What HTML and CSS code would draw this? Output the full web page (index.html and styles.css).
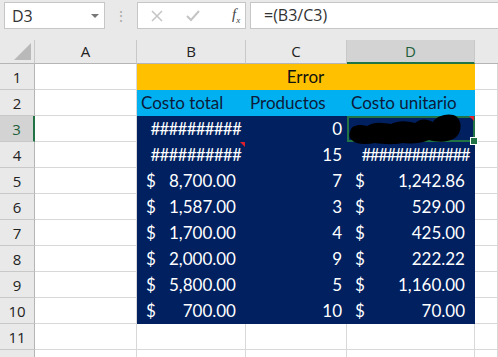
FILE: index.html
```html
<!doctype html>
<html>
<head>
	<title>Costo unitario</title>
	<link rel="stylesheet" href="styles.css">
</head>
<body>
	<div class="bar">
		<div class="namebox">
			<span>D3</span>
			<span class="drop"></span>
		</div>
		<div class="dots">&#8942;</div>
		<div class="buttons">
			<svg width="12" height="12" viewBox="0 0 12 12"><path d="M1 1 L11 11 M11 1 L1 11" stroke="#c4c4c4" stroke-width="1.5"/></svg>
			<svg width="14" height="12" viewBox="0 0 14 12"><path d="M1 6 L5 10 L13 1" stroke="#c4c4c4" stroke-width="2" fill="none"/></svg>
			<span class="fx"><i>f</i><sub>x</sub></span>
		</div>
		<div class="formula">=(B3/C3)</div>
	</div>

	<div class="sheet">
		<div class="hd corner"><span class="tri"></span></div>
		<div class="hd">A</div>
		<div class="hd">B</div>
		<div class="hd">C</div>
		<div class="hd sel">D</div>
		<div class="hd last"></div>

		<div class="rh">1</div>
		<div class="c"></div>
		<div class="c title">Error</div>
		<div class="c"></div>

		<div class="rh">2</div>
		<div class="c"></div>
		<div class="c blue">Costo total</div>
		<div class="c blue">Productos</div>
		<div class="c blue">Costo unitario</div>
		<div class="c"></div>

		<div class="rh sel">3</div>
		<div class="c"></div>
		<div class="c navy hash">##########</div>
		<div class="c navy num">0</div>
		<div class="c navy active">
			<svg class="blob" width="120" height="34" viewBox="0 0 120 34"><path d="M3 20 C4 13 12 12 20 14 C28 9 36 11 44 12 C52 8 60 9 68 11 C74 6 80 7 86 10 C90 3 104 0 110 5 C116 11 114 22 108 26 C100 31 90 30 82 28 C72 32 64 32 56 31 C46 33 36 32 28 31 C18 33 8 32 5 28 C2 26 2 23 3 20 Z" fill="#000"/></svg>
			<span class="note"></span>
		</div>
		<div class="c"></div>

		<div class="rh">4</div>
		<div class="c"></div>
		<div class="c navy hash">##########<span class="note"></span></div>
		<div class="c navy num">15</div>
		<div class="c navy hash wide">#############</div>
		<div class="c"></div>

		<div class="rh">5</div>
		<div class="c"></div>
		<div class="c navy acc"><span>$</span><span>8,700.00</span></div>
		<div class="c navy num">7</div>
		<div class="c navy acc d"><span>$</span><span>1,242.86</span></div>
		<div class="c"></div>

		<div class="rh">6</div>
		<div class="c"></div>
		<div class="c navy acc"><span>$</span><span>1,587.00</span></div>
		<div class="c navy num">3</div>
		<div class="c navy acc d"><span>$</span><span>529.00</span></div>
		<div class="c"></div>

		<div class="rh">7</div>
		<div class="c"></div>
		<div class="c navy acc"><span>$</span><span>1,700.00</span></div>
		<div class="c navy num">4</div>
		<div class="c navy acc d"><span>$</span><span>425.00</span></div>
		<div class="c"></div>

		<div class="rh">8</div>
		<div class="c"></div>
		<div class="c navy acc"><span>$</span><span>2,000.00</span></div>
		<div class="c navy num">9</div>
		<div class="c navy acc d"><span>$</span><span>222.22</span></div>
		<div class="c"></div>

		<div class="rh">9</div>
		<div class="c"></div>
		<div class="c navy acc"><span>$</span><span>5,800.00</span></div>
		<div class="c navy num">5</div>
		<div class="c navy acc d"><span>$</span><span>1,160.00</span></div>
		<div class="c"></div>

		<div class="rh">10</div>
		<div class="c"></div>
		<div class="c navy acc"><span>$</span><span>700.00</span></div>
		<div class="c navy num">10</div>
		<div class="c navy acc d"><span>$</span><span>70.00</span></div>
		<div class="c"></div>

		<div class="rh">11</div>
		<div class="c"></div>
		<div class="c"></div>
		<div class="c"></div>
		<div class="c"></div>
		<div class="c"></div>

		<div class="rh"></div>
		<div class="c"></div>
		<div class="c"></div>
		<div class="c"></div>
		<div class="c"></div>
		<div class="c"></div>
	</div>
</body>
</html>
```

FILE: styles.css
```css
body {
	margin: 0;
	width: 498px;
	height: 357px;
	overflow: hidden;
	background: #fff;
	font-family: Lato, "Open Sans", sans-serif;
}

.bar {
	display: flex;
	align-items: stretch;
	height: 40px;
	padding-top: 2px;
	box-sizing: border-box;
	background: #e9e9e9;
}

.namebox {
	width: 101px;
	height: 27px;
	margin-left: 4px;
	box-sizing: border-box;
	border: 1px solid #c6c6c6;
	background: #fff;
	display: flex;
	align-items: center;
	justify-content: space-between;
	padding: 0 5px 0 7px;
	font-family: "Open Sans", sans-serif;
	font-size: 16px;
	color: #333;
}

.drop {
	width: 0;
	height: 0;
	border-left: 4px solid transparent;
	border-right: 4px solid transparent;
	border-top: 4px solid #777;
}

.dots {
	width: 32px;
	height: 27px;
	line-height: 27px;
	text-align: center;
	color: #a8a8a8;
	font-size: 14px;
}

.buttons {
	width: 109px;
	height: 27px;
	box-sizing: border-box;
	border: 1px solid #c6c6c6;
	background: #fff;
	display: flex;
	align-items: center;
	padding-left: 13px;
	gap: 23px;
}

.fx {
	font-family: "Liberation Serif", serif;
	font-size: 15px;
	color: #444;
	margin-left: 9px;
}

.fx sub {
	font-size: 9px;
	font-style: italic;
}

.formula {
	flex: 1;
	height: 27px;
	margin-left: 4px;
	box-sizing: border-box;
	border: 1px solid #c6c6c6;
	border-right: none;
	background: #fff;
	padding-left: 13px;
	line-height: 25px;
	font-family: "Open Sans", sans-serif;
	font-size: 16px;
	color: #333;
}

.sheet {
	display: grid;
	grid-template-columns: 35px 102px 109px 101px 128px 1fr;
	grid-template-rows: 24px repeat(12, 26px);
	font-size: 17px;
}

.hd {
	background: #e9e9e9;
	border-right: 1px solid #c8c8c8;
	border-bottom: 1px solid #b5b5b5;
	text-align: center;
	line-height: 23px;
	font-family: "Open Sans", sans-serif;
	font-size: 15px;
	color: #222;
	position: relative;
}

.hd.last {
	border-right: none;
}

.hd.sel {
	background: #d3d3d3;
	border-bottom: 2px solid #217346;
	color: #1e5e3a;
	line-height: 22px;
}

.corner .tri {
	position: absolute;
	right: 3px;
	bottom: 3px;
	width: 0;
	height: 0;
	border-left: 17px solid transparent;
	border-bottom: 17px solid #b9b9b9;
}

.rh {
	background: #e9e9e9;
	border-right: 1px solid #b5b5b5;
	border-bottom: 1px solid #c8c8c8;
	text-align: center;
	line-height: 26px;
	font-family: "Open Sans", sans-serif;
	font-size: 15px;
	color: #222;
}

.rh.sel {
	background: #d3d3d3;
	border-right: 2px solid #217346;
	color: #1e5e3a;
}

.c {
	border-right: 1px solid #d8d8d8;
	border-bottom: 1px solid #d8d8d8;
	line-height: 26px;
	padding: 0 4px;
	white-space: nowrap;
	overflow: hidden;
	position: relative;
}

.title {
	grid-column: span 3;
	background: #ffc000;
	border-color: #ffc000;
	text-align: center;
	color: #111;
}

.blue {
	background: #00b0f0;
	border-color: #00b0f0;
	color: #0d1a3a;
}

.navy {
	background: #002060;
	border-color: #002060;
	color: #fff;
}

.num {
	text-align: right;
}

.hash {
	text-align: right;
	letter-spacing: -0.8px;
	padding-right: 4px;
	overflow: visible;
}

.hash.wide {
	letter-spacing: -1.6px;
	padding-right: 5px;
}

.acc {
	display: flex;
	justify-content: space-between;
	padding: 0 9px 0 9px;
}

.acc.d {
	padding: 0 9px 0 8px;
}

.active {
	overflow: visible;
	z-index: 2;
	outline: 2px solid #217346;
	outline-offset: -2px;
}

.active::after {
	content: "";
	position: absolute;
	right: -4px;
	bottom: -4px;
	width: 6px;
	height: 6px;
	background: #217346;
	border: 1px solid #fff;
}

.blob {
	position: absolute;
	left: 0;
	top: -4px;
}

.note {
	position: absolute;
	right: 0;
	top: 0;
	width: 0;
	height: 0;
	border-left: 5px solid transparent;
	border-top: 5px solid #e0202c;
}
```
